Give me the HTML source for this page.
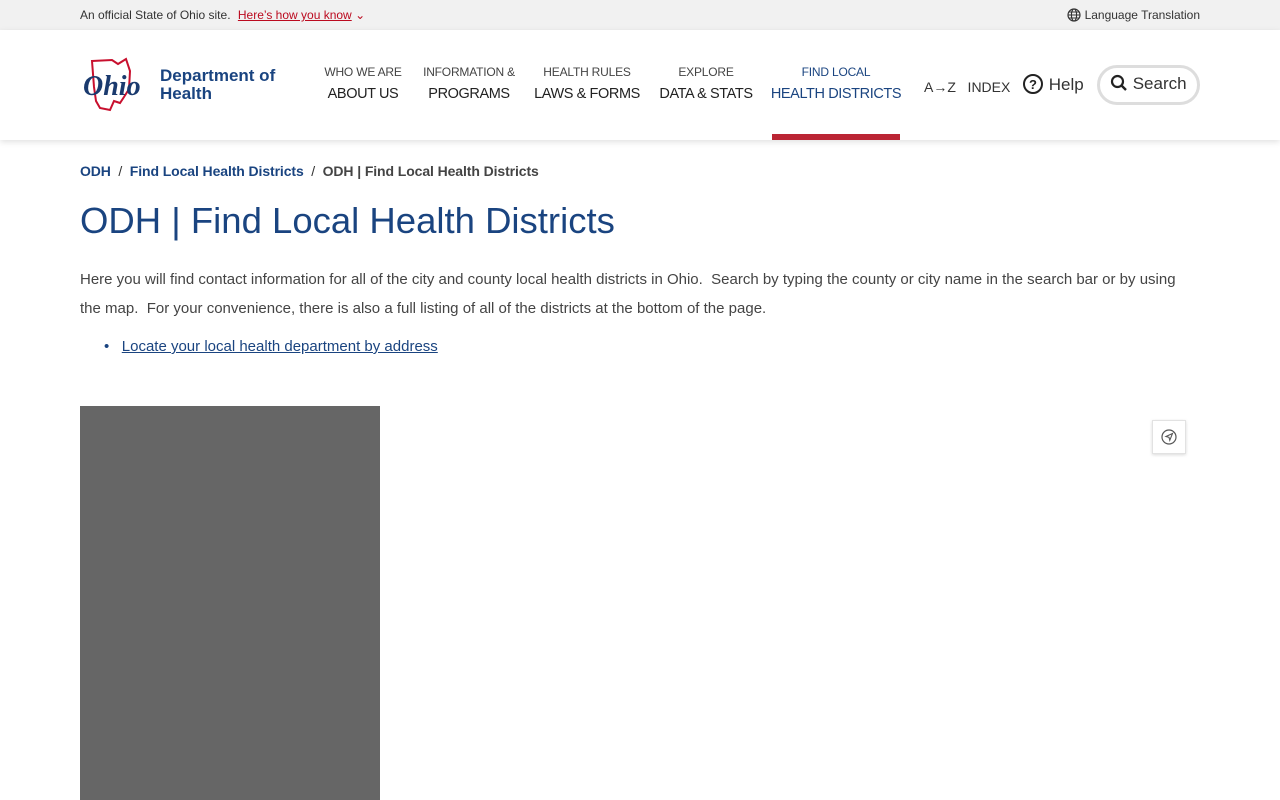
<!DOCTYPE html>
<html><head><meta charset="utf-8"><style>
*{box-sizing:border-box;margin:0;padding:0}
body{width:1280px;height:800px;overflow:hidden;font-family:"Liberation Sans",sans-serif;background:#fff;color:#333;position:relative}
.top{height:30px;background:#f1f1f1;font-size:12px;color:#333}
.top .l{position:absolute;left:80px;top:8px}
.top .l a{color:#bb0a1f;text-decoration:underline;margin-left:4px}
.top .r{position:absolute;right:80px;top:8px}
.hdr{position:absolute;top:30px;left:0;width:1280px;height:110px;background:#fff;box-shadow:0 2px 6px rgba(0,0,0,.12)}
.nav{position:absolute;top:35px;text-align:center;color:#333;white-space:nowrap}
.nav .s{font-size:12px;display:block;color:#444;letter-spacing:-.2px}
.nav .b{font-size:14.5px;display:block;margin-top:7px;color:#222;letter-spacing:-.4px}
.nav.act .s,.nav.act .b{color:#1a4480}
.bar{position:absolute;left:772px;top:104px;width:128px;height:6px;background:#bb2534}
.bc{position:absolute;top:163px;left:80px;font-size:14px;color:#333;letter-spacing:-.1px}
.bc a{color:#1a4480;text-decoration:none;font-weight:bold}
h1{position:absolute;top:200px;left:80px;font-size:36.5px;font-weight:normal;color:#1a4480}
.p{position:absolute;top:265px;left:80px;width:1120px;font-size:15px;line-height:29px;color:#444}
.li{position:absolute;top:338px;left:104px;font-size:15px;color:#1a4480}
.li a{color:#1a4480;text-decoration:underline}
.map{position:absolute;left:80px;top:406px;width:300px;height:394px;background:#666}
.loc{position:absolute;left:1152px;top:420px;width:34px;height:34px;background:#fff;border:1px solid #e2e2e2;box-shadow:0 1px 3px rgba(0,0,0,.15)}
</style></head><body>
<div class="top"><span class="l">An official State of Ohio site. <a>Here’s how you know</a> <span style="color:#bb0a1f">⌄</span></span>
<span class="r"><svg width="14" height="14" viewBox="0 0 14 14" style="vertical-align:-3px;margin-right:4px"><circle cx="7" cy="7" r="6" fill="none" stroke="#333" stroke-width="1.2"/><ellipse cx="7" cy="7" rx="2.6" ry="6" fill="none" stroke="#333" stroke-width="1.1"/><path d="M1 7h12M2 4h10M2 10h10" stroke="#333" stroke-width="1"/></svg>Language Translation</span></div>
<div class="hdr">
<svg style="position:absolute;left:80px;top:27px" width="72" height="56" viewBox="0 0 72 56"><path d="M12 4 L32 3 L38 7 L46 2 L50 14 L49 32 L44 40 L40 46 L34 44 L30 53 L20 51 L16 44 L14 30 Z" fill="none" stroke="#c8102e" stroke-width="2"/><text x="3" y="38" font-family="Liberation Serif" font-style="italic" font-weight="bold" font-size="28" fill="#1a3a6e">Ohio</text></svg>
<div style="position:absolute;left:160px;top:37px;font-weight:bold;font-size:17px;line-height:18px;color:#1a4480">Department of<br>Health</div>
<div class="nav" style="left:322px;width:82px"><span class="s">WHO WE ARE</span><span class="b">ABOUT US</span></div>
<div class="nav" style="left:418px;width:102px"><span class="s">INFORMATION &amp;</span><span class="b">PROGRAMS</span></div>
<div class="nav" style="left:534px;width:106px"><span class="s">HEALTH RULES</span><span class="b">LAWS &amp; FORMS</span></div>
<div class="nav" style="left:656px;width:100px"><span class="s">EXPLORE</span><span class="b">DATA &amp; STATS</span></div>
<div class="nav act" style="left:770px;width:132px"><span class="s">FIND LOCAL</span><span class="b">HEALTH DISTRICTS</span></div>
<div class="bar"></div>
<div style="position:absolute;left:924px;top:49px;font-size:14px;color:#333">A→Z &nbsp; INDEX</div>
<div style="position:absolute;left:1022px;top:43px;font-size:17px;color:#333"><svg width="22" height="22" viewBox="0 0 22 22" style="vertical-align:-5px"><circle cx="11" cy="11" r="9" fill="none" stroke="#222" stroke-width="2"/><text x="11" y="16" text-anchor="middle" font-size="13" font-weight="bold" fill="#222" font-family="Liberation Sans">?</text></svg> Help</div>
<div style="position:absolute;left:1097px;top:35px;width:103px;height:40px;border:3px solid #ddd;border-radius:20px;font-size:17px;color:#333;padding:6px 0 0 10px;white-space:nowrap"><svg width="18" height="18" viewBox="0 0 18 18" style="vertical-align:-3px"><circle cx="7.5" cy="7.5" r="5.5" fill="none" stroke="#222" stroke-width="2.2"/><path d="M11.5 11.5L16 16" stroke="#222" stroke-width="2.4"/></svg> Search</div>
</div>
<div class="bc"><a>ODH</a> &nbsp;/&nbsp; <a>Find Local Health Districts</a> &nbsp;/&nbsp; <span style="font-weight:bold;color:#444">ODH | Find Local Health Districts</span></div>
<h1>ODH | Find Local Health Districts</h1>
<div class="p">Here you will find contact information for all of the city and county local health districts in Ohio.&nbsp; Search by typing the county or city name in the search bar or by using the map.&nbsp; For your convenience, there is also a full listing of all of the districts at the bottom of the page.</div>
<div class="li">•&nbsp;&nbsp; <a>Locate your local health department by address</a></div>
<div class="map"></div>
<div class="loc"><svg width="34" height="34" viewBox="0 0 34 34"><circle cx="16" cy="16" r="7" fill="none" stroke="#555" stroke-width="1.2"/><path d="M19.5 12.5L13 15.5l3 .8.8 3z" fill="none" stroke="#555" stroke-width="1.1"/></svg></div>
</body></html>
